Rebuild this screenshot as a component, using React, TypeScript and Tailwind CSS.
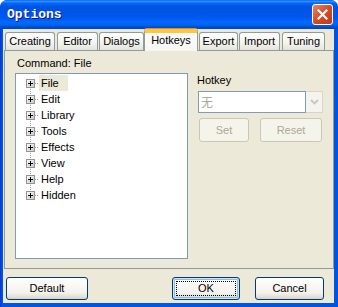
const tabs = [
  { label: "Creating", w: "w-[50px]", ml: "ml-[2px]" },
  { label: "Editor", w: "w-[41px]", ml: "ml-[2px]" },
  { label: "Dialogs", w: "w-[45px]", ml: "ml-[1px]" },
  { label: "Hotkeys", w: "w-[54px]", ml: "ml-[0px]", active: true },
  { label: "Export", w: "w-[39px]", ml: "ml-[1px]" },
  { label: "Import", w: "w-[41px]", ml: "ml-[1px]" },
  { label: "Tuning", w: "w-[43px]", ml: "ml-[2px]" },
];

const commands = ["File", "Edit", "Library", "Tools", "Effects", "View", "Help", "Hidden"];

const TreeGlyph = ({ first, last }: { first: boolean; last: boolean }) => (
  <svg width="23" height="16" viewBox="0 0 23 16" className="shrink-0">
    <defs>
      <linearGradient id="tbox" x1="0" y1="0" x2="1" y2="1">
        <stop offset="0" stopColor="#ffffff" />
        <stop offset="1" stopColor="#c6c5bc" />
      </linearGradient>
    </defs>
    <line x1="14.5" y1={first ? 8 : 0} x2="14.5" y2={last ? 8 : 16} stroke="#a0a0a0" strokeDasharray="1 1" />
    <line x1="19" y1="8.5" x2="23" y2="8.5" stroke="#a0a0a0" strokeDasharray="1 1" />
    <rect x="10.5" y="4.5" width="8" height="8" fill="url(#tbox)" stroke="#8c94a0" />
    <line x1="12" y1="8.5" x2="17" y2="8.5" stroke="#000" />
    <line x1="14.5" y1="6" x2="14.5" y2="11" stroke="#000" />
  </svg>
);

const XpButton = ({ label, w, focused }: { label: string; w: string; focused?: boolean }) => (
  <button
    className={`relative ${w} h-[23px] rounded-[3px] border border-[#003c74] bg-[linear-gradient(to_bottom,#ffffff,#f3f2ec_70%,#e3e0d5_90%,#d6d0c5)] text-[11px] text-black ${
      focused ? "shadow-[inset_0_0_0_1px_#cee7ff,inset_0_0_0_2px_#98b8ea]" : ""
    }`}
  >
    {focused && <span className="absolute inset-[3px] border border-dotted border-black" />}
    <span className="relative">{label}</span>
  </button>
);

const DisabledButton = ({ label, w }: { label: string; w: string }) => (
  <button className={`${w} h-[24px] rounded-[3px] border border-[#c9c7ba] bg-[#f5f4ea] text-[11px] text-[#aca899]`}>
    {label}
  </button>
);

export default function App() {
  return (
    <div className="w-[338px] h-[307px] rounded-t-[7px] bg-[linear-gradient(to_right,#0831d9,#0054e3_2px,#0055ea_50%,#0054e3)] flex flex-col overflow-hidden font-['Liberation_Sans',Arial,sans-serif] text-[11px] text-black">
      {/* title bar */}
      <div className="h-[29px] shrink-0 flex items-center pl-[7px] pr-[5px] rounded-t-[7px] bg-[linear-gradient(to_bottom,#0058ee_0%,#3593ff_4%,#288eff_6%,#127dff_8%,#036ffc_10%,#0262ee_14%,#0057e5_20%,#0054e3_24%,#0055eb_56%,#005bf5_66%,#026afe_76%,#0062ef_86%,#0052d6_92%,#0048c4_96%,#0045be_100%)]">
        <span className="font-['Liberation_Mono',monospace] font-bold text-[13px] text-white [text-shadow:1px_1px_#0a1883] pt-[1px]">
          Options
        </span>
        <div className="ml-auto w-[21px] h-[21px] rounded-[3px] border border-white bg-[linear-gradient(135deg,#e9856a,#d44b26_50%,#c2381c)] flex items-center justify-center">
          <svg width="11" height="11" viewBox="0 0 11 11">
            <path d="M1.5 1.5 L9.5 9.5 M9.5 1.5 L1.5 9.5" stroke="#fff" strokeWidth="2.2" strokeLinecap="square" />
          </svg>
        </div>
      </div>

      {/* client area */}
      <div className="flex-1 ml-[3px] mr-[4px] mb-[4px] bg-[#ece9d8] flex flex-col">
        {/* tabs */}
        <div className="h-[21px] flex items-end relative z-10">
          {tabs.map((t) =>
            t.active ? (
              <div
                key={t.label}
                className={`${t.w} ${t.ml} h-[22px] -mb-[1px] rounded-t-[3px] border-x border-[#919b9c] border-t-[3px] border-t-[#ffc83c] bg-[linear-gradient(to_bottom,#fcfcfe,#f7f6f0)] flex items-center justify-center pb-[2px] shadow-[inset_0_1px_0_#ffc83c,0_-1px_0_#e68b2c]`}
              >
                {t.label}
              </div>
            ) : (
              <div
                key={t.label}
                className={`${t.w} ${t.ml} h-[18px] rounded-t-[3px] border-x border-t border-[#919b9c] bg-[linear-gradient(to_bottom,#ffffff,#f3f3ef_60%,#e4e3dc)] flex items-center justify-center`}
              >
                {t.label}
              </div>
            )
          )}
        </div>

        {/* tab panel */}
        <div className="ml-[1px] w-[330px] h-[219px] border border-[#919b9c] bg-[#ece9d8] pt-[6px] pl-[10px] flex flex-col">
          <div className="h-[13px] leading-[13px] pl-[2px]">Command: File</div>
          <div className="flex mt-[3px]">
            <div className="w-[173px] h-[186px] border border-[#7f9db9] bg-white pt-[1px]">
              {commands.map((c, i) => (
                <div key={c} className="h-[16px] flex items-center">
                  <TreeGlyph first={i === 0} last={i === commands.length - 1} />
                  <span className={`h-[16px] leading-[16px] pl-[2px] ${i === 0 ? "w-[29px] bg-[#ece9d8]" : ""}`}>{c}</span>
                </div>
              ))}
            </div>

            <div className="ml-[9px] flex flex-col">
              <div className="h-[13px] leading-[13px] mt-[1px]">Hotkey</div>
              <div className="ml-[1px] mt-[4px] flex h-[22px]">
                <div className="w-[108px] h-[22px] border border-[#7f9db9] bg-white flex items-center pl-[2px]">
                  <span className="font-['Noto_Sans_CJK_SC',sans-serif] text-[12px] text-[#aca899] leading-none">无</span>
                </div>
                <div className="w-[17px] h-[22px] border border-l-0 border-[#d8d4c6] bg-[#f4f3ee] flex items-center justify-center">
                  <svg width="9" height="6" viewBox="0 0 9 6">
                    <path d="M1 1 L4.5 4.5 L8 1" stroke="#c9c7ba" strokeWidth="1.8" fill="none" />
                  </svg>
                </div>
              </div>
              <div className="flex mt-[5px] ml-[2px]">
                <DisabledButton label="Set" w="w-[50px]" />
                <div className="ml-[11px]">
                  <DisabledButton label="Reset" w="w-[62px]" />
                </div>
              </div>
            </div>
          </div>
        </div>

        {/* buttons */}
        <div className="flex mt-[8px] pl-[3px]">
          <XpButton label="Default" w="w-[82px]" />
          <div className="ml-auto flex mr-[10px]">
            <XpButton label="OK" w="w-[68px]" focused />
            <div className="ml-[15px]">
              <XpButton label="Cancel" w="w-[69px]" />
            </div>
          </div>
        </div>
      </div>
    </div>
  );
}
